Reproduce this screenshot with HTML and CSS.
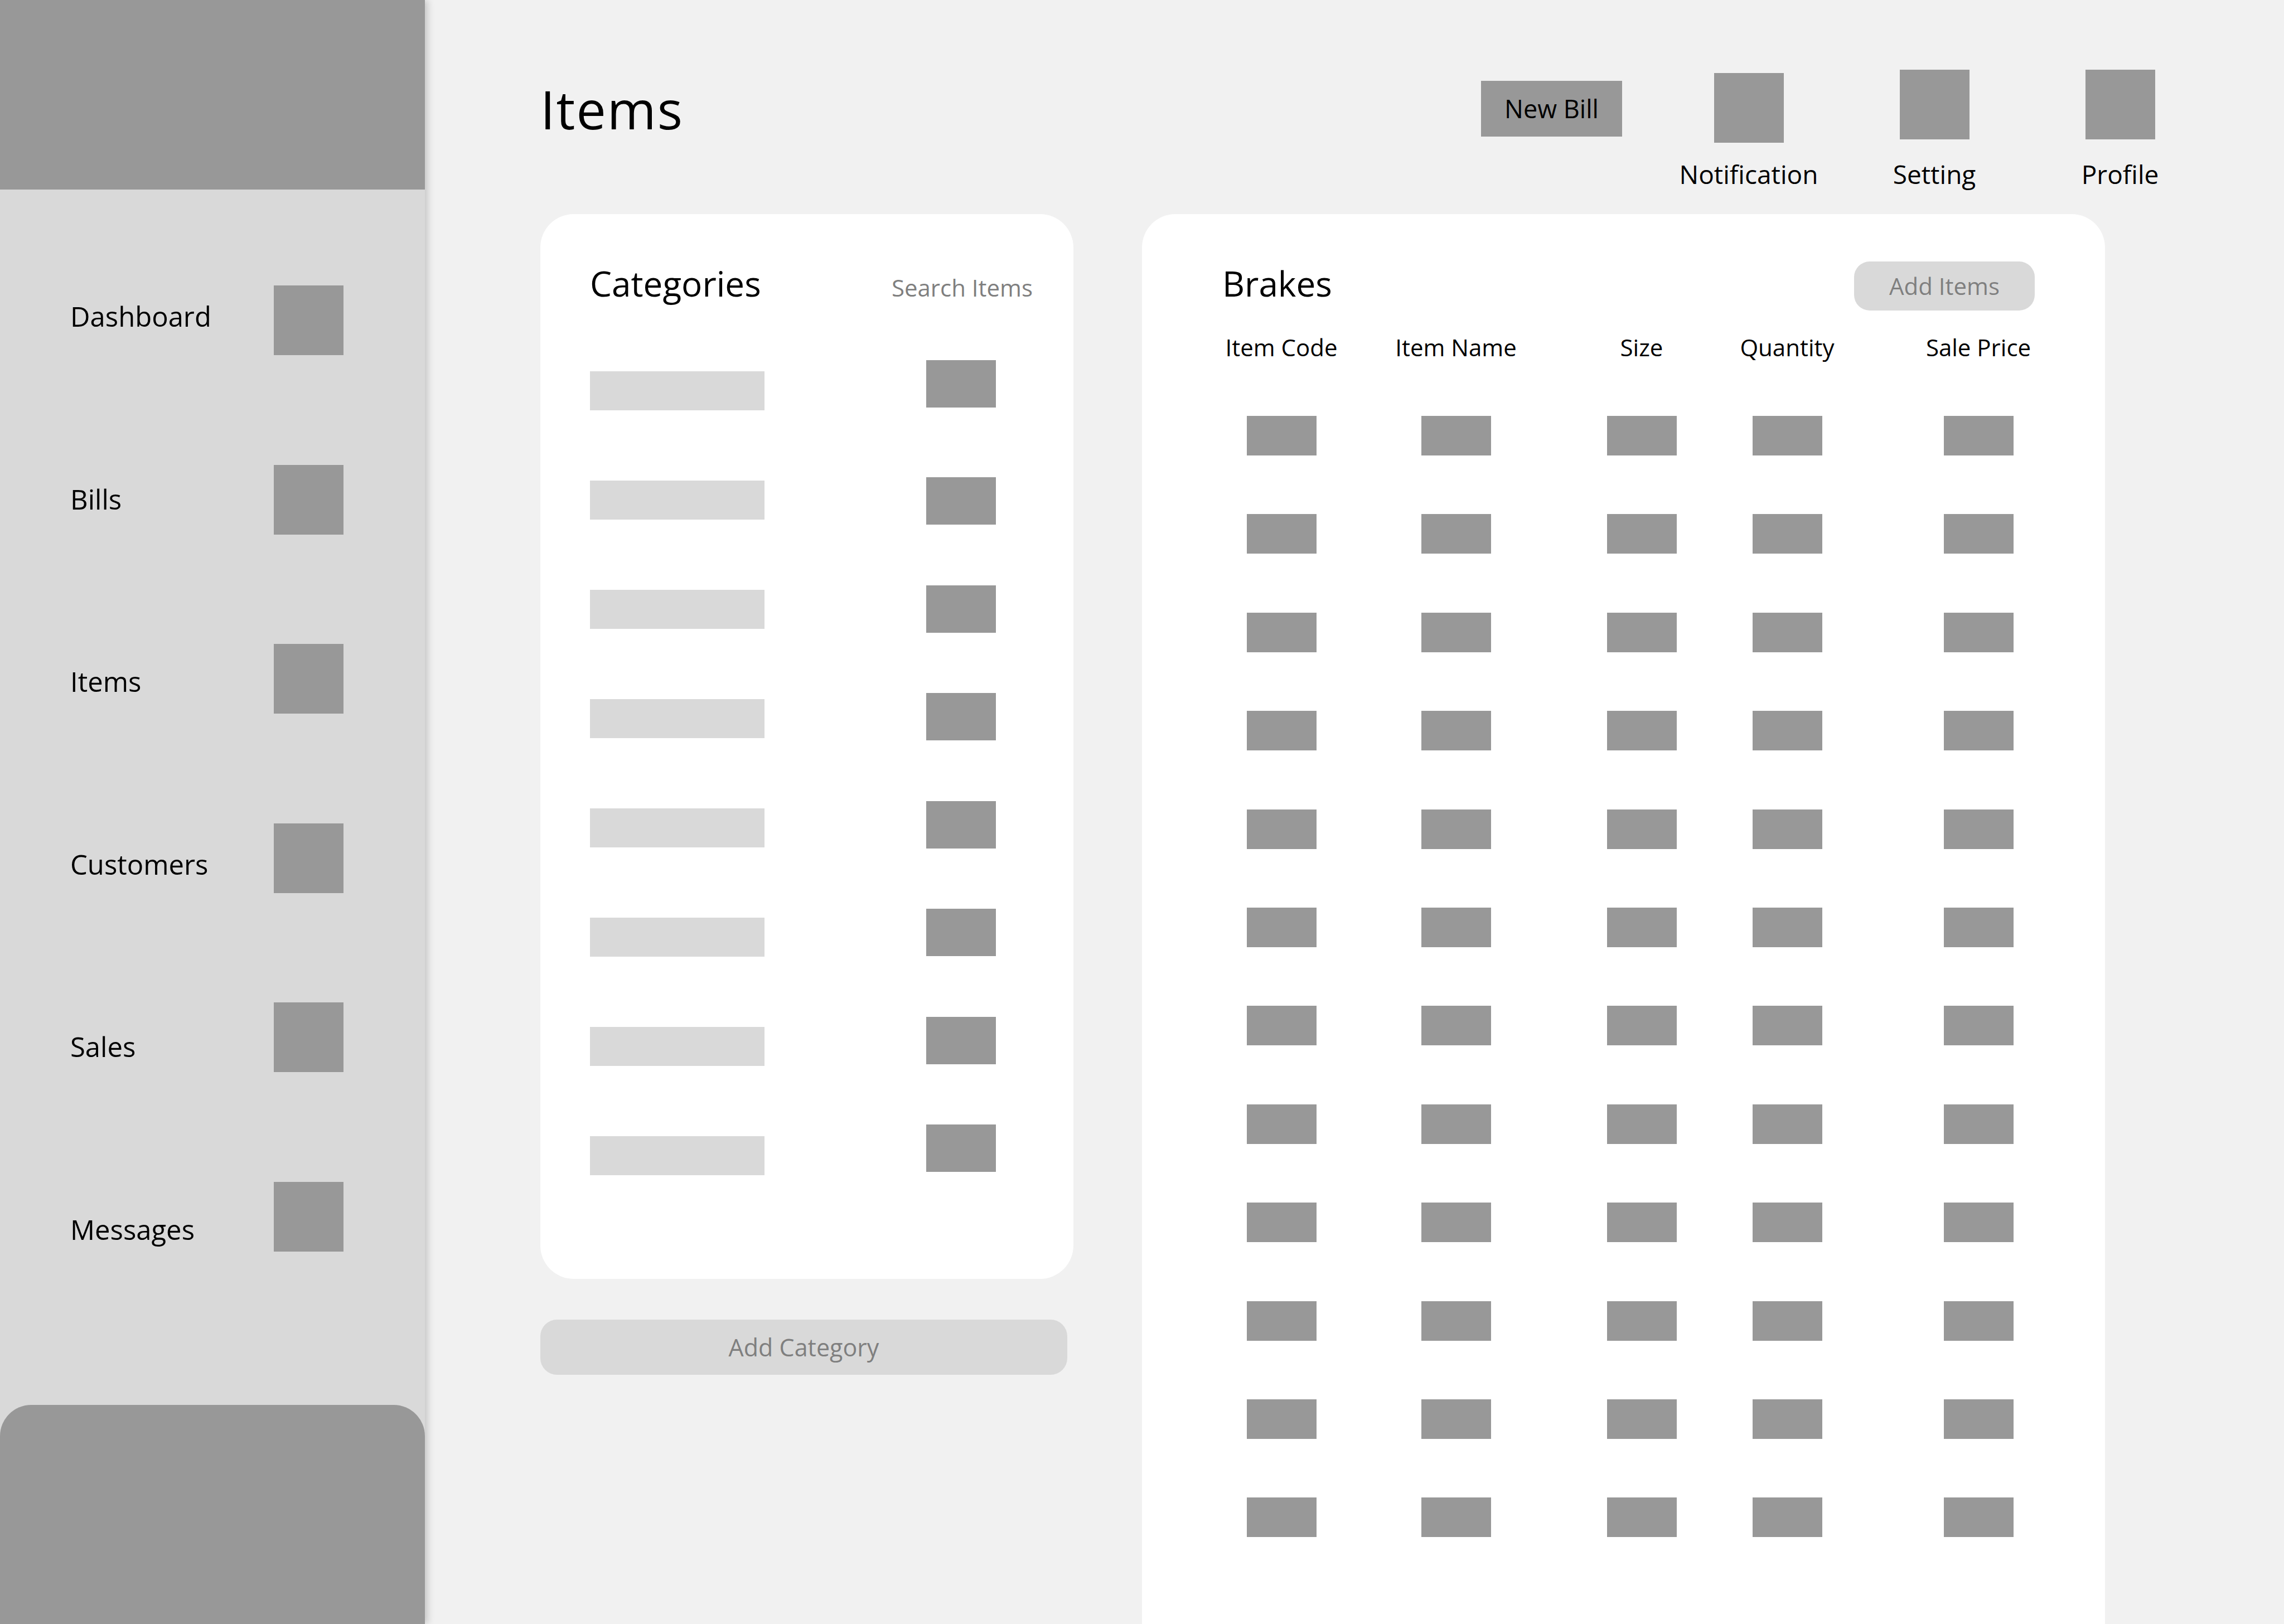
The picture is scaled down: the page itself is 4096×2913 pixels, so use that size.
FILE: index.html
```html
<!DOCTYPE html>
<html lang="en">

<head>
    <meta charset="UTF-8">
    <meta name="viewport" content="width=device-width, initial-scale=1.0">
    <title>Items</title>
    <link rel="stylesheet" href="styles.css">
</head>

<body>
    <div class="app">
        <aside class="sidebar">
            <div class="brand"></div>

            <nav class="nav">
                <ul class="nav-labels">
                    <li>Dashboard</li>
                    <li>Bills</li>
                    <li>Items</li>
                    <li>Customers</li>
                    <li>Sales</li>
                    <li>Messages</li>
                </ul>
                <div class="nav-icons">
                    <span class="box nav-box"></span>
                    <span class="box nav-box"></span>
                    <span class="box nav-box"></span>
                    <span class="box nav-box"></span>
                    <span class="box nav-box"></span>
                    <span class="box nav-box"></span>
                </div>
            </nav>

            <div class="account"></div>
        </aside>

        <main class="main">
            <header class="topbar">
                <h1>Items</h1>
                <div class="actions">
                    <button class="new-bill">New Bill</button>
                    <div class="tool">
                        <span class="box tool-box low"></span>
                        <span class="tool-label">Notification</span>
                    </div>
                    <div class="tool">
                        <span class="box tool-box"></span>
                        <span class="tool-label">Setting</span>
                    </div>
                    <div class="tool">
                        <span class="box tool-box"></span>
                        <span class="tool-label">Profile</span>
                    </div>
                </div>
            </header>

            <div class="panels">
                <div class="cat-col">
                    <section class="card categories">
                        <div class="card-head">
                            <h2>Categories</h2>
                            <span class="search">Search Items</span>
                        </div>
                        <div class="cat-list">
                            <div class="cat-bars">
                                <span class="bar"></span>
                                <span class="bar"></span>
                                <span class="bar"></span>
                                <span class="bar"></span>
                                <span class="bar"></span>
                                <span class="bar"></span>
                                <span class="bar"></span>
                                <span class="bar"></span>
                            </div>
                            <div class="cat-icons">
                                <span class="box cat-box"></span>
                                <span class="box cat-box"></span>
                                <span class="box cat-box"></span>
                                <span class="box cat-box"></span>
                                <span class="box cat-box"></span>
                                <span class="box cat-box"></span>
                                <span class="box cat-box"></span>
                                <span class="box cat-box"></span>
                            </div>
                        </div>
                    </section>
                    <button class="add-category">Add Category</button>
                </div>

                <section class="card items-card">
                    <div class="card-head">
                        <h2>Brakes</h2>
                        <button class="add-items">Add Items</button>
                    </div>
                    <div class="item-table" id="itemTable">
                        <span class="th">Item Code</span>
                        <span class="th">Item Name</span>
                        <span class="th">Size</span>
                        <span class="th">Quantity</span>
                        <span class="th">Sale Price</span>
                    </div>
                </section>
            </div>
        </main>
    </div>

    <script>
        // fill the table with placeholder cells
        const table = document.getElementById("itemTable");
        for (let row = 0; row < 12; row++) {
            for (let col = 0; col < 5; col++) {
                const cell = document.createElement("span");
                cell.className = "box cell";
                table.appendChild(cell);
            }
        }
    </script>
</body>

</html>
```

FILE: styles.css
```css
body {
    font-family: "Open Sans", "Noto Sans", sans-serif;
    background-color: #f1f1f1;
    margin: 0;
    padding: 0;
    width: 4096px;
    height: 2913px;
    overflow: hidden;
    color: #000000;
}

.app {
    display: flex;
    height: 2913px;
}

.box {
    display: block;
    background-color: #989898;
}

/* sidebar */

.sidebar {
    width: 762px;
    flex-shrink: 0;
    display: flex;
    flex-direction: column;
    background-color: #d9d9d9;
    box-shadow: 5px 0 12px rgba(0, 0, 0, 0.18);
    position: relative;
    z-index: 1;
}

.brand {
    height: 340px;
    background-color: #989898;
}

.nav {
    display: grid;
    grid-template-columns: 365px 125px;
    padding-left: 126px;
}

.nav-labels {
    list-style: none;
    margin: 0;
    padding: 203px 0 0 0;
    display: flex;
    flex-direction: column;
    gap: 278.6px;
    font-size: 49px;
    line-height: 49px;
}

.nav-icons {
    padding-top: 172px;
    display: flex;
    flex-direction: column;
    gap: 196.6px;
}

.nav-box {
    width: 125px;
    height: 125px;
}

.account {
    margin-top: auto;
    height: 393px;
    background-color: #989898;
    border-radius: 56px 56px 0 0;
}

/* main */

.main {
    flex: 1;
    padding: 125px 164px 0 207px;
}

.topbar {
    display: flex;
    justify-content: space-between;
    align-items: flex-start;
}

.topbar h1 {
    margin: 23px 0 0 0;
    font-size: 95px;
    font-weight: 500;
    letter-spacing: 2px;
    line-height: 1;
}

.actions {
    display: flex;
    align-items: flex-start;
    gap: 73px;
}

.new-bill {
    margin-top: 20px;
    margin-right: 24px;
    width: 253px;
    height: 100px;
    padding: 0;
    border: none;
    background-color: #989898;
    font-family: inherit;
    font-size: 45px;
    line-height: 96px;
    color: #000000;
}

.tool {
    width: 260px;
    display: flex;
    flex-direction: column;
    align-items: center;
}

.tool-box {
    width: 125px;
    height: 125px;
}

.tool-box.low {
    margin-top: 6px;
    margin-bottom: -6px;
}

.tool-label {
    margin-top: 39px;
    font-size: 46px;
    line-height: 1;
}

.panels {
    display: flex;
    align-items: flex-start;
    gap: 123px;
    margin-top: 49px;
}

.card {
    background-color: #ffffff;
    border-radius: 60px;
    box-sizing: border-box;
}

.card-head {
    display: flex;
    justify-content: space-between;
    align-items: baseline;
    height: 62px;
}

.card-head h2 {
    margin: 0;
    font-size: 62px;
    font-weight: 400;
    line-height: 1;
}

/* categories */

.cat-col {
    width: 956px;
}

.categories {
    height: 1910px;
    padding: 93px 73px 0 89px;
}

.search {
    font-size: 42px;
    line-height: 1;
    color: #7f7f7f;
}

.cat-list {
    display: flex;
    justify-content: space-between;
    padding-right: 66px;
}

.cat-bars {
    padding-top: 127px;
    display: flex;
    flex-direction: column;
    gap: 126px;
}

.bar {
    display: block;
    width: 313px;
    height: 70px;
    background-color: #d9d9d9;
}

.cat-icons {
    padding-top: 107px;
    display: flex;
    flex-direction: column;
    gap: 108.5px;
}

.cat-box {
    width: 125px;
    height: 85px;
}

.cat-box:first-child {
    margin-bottom: 16.5px;
}

.add-category {
    display: block;
    width: 945px;
    height: 99px;
    margin-top: 73px;
    padding: 0;
    border: none;
    border-radius: 30px;
    background-color: #d9d9d9;
    font-family: inherit;
    font-size: 43px;
    line-height: 95px;
    color: #7f7f7f;
}

/* items table */

.items-card {
    width: 1727px;
    height: 2529px;
    padding: 93px 126px 0 144px;
    border-radius: 60px 60px 0 0;
}

.items-card .card-head {
    align-items: flex-start;
}

.add-items {
    margin-top: -8px;
    width: 324px;
    height: 88px;
    padding: 0;
    border: none;
    border-radius: 28px;
    background-color: #d9d9d9;
    font-family: inherit;
    font-size: 42px;
    line-height: 82px;
    color: #7f7f7f;
}

.item-table {
    display: grid;
    grid-template-columns: 212px 414px 252px 270px 416px;
    justify-items: center;
    row-gap: 105.4px;
    margin-top: 62.7px;
}

.th {
    font-size: 42px;
    line-height: 1;
    white-space: nowrap;
    margin-bottom: -3px;
}

.cell {
    width: 125px;
    height: 71px;
}
```
